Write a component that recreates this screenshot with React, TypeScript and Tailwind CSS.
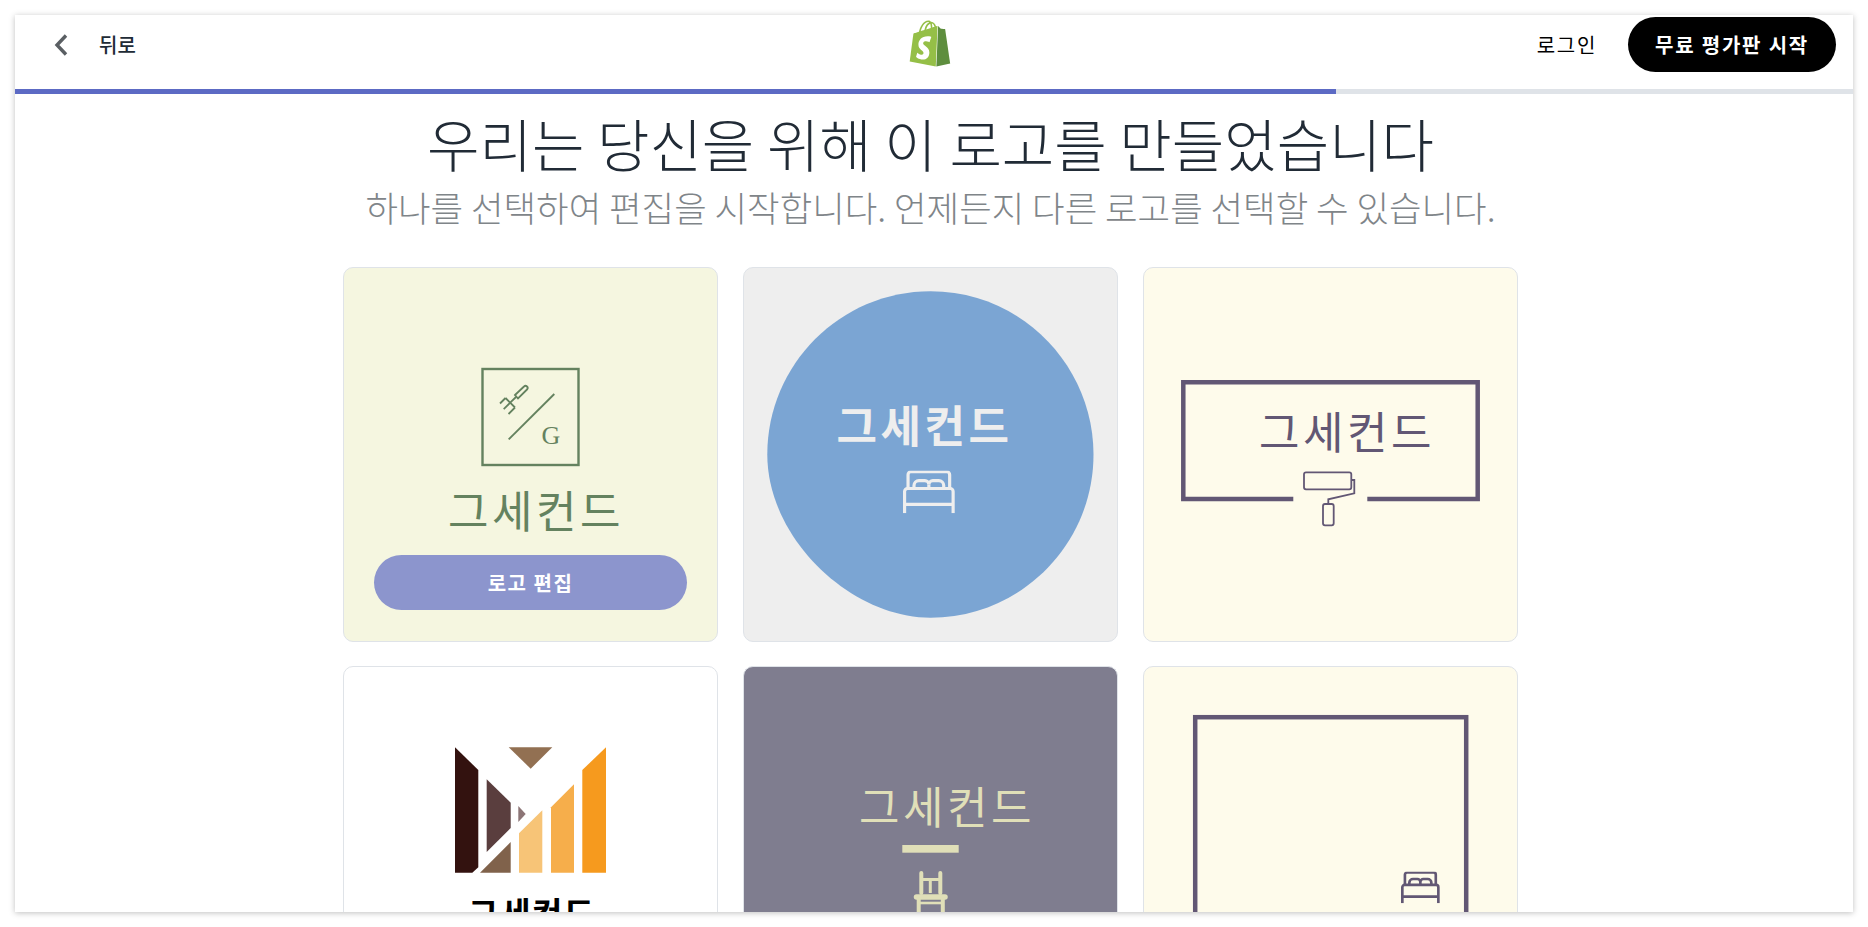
import React from 'react';

const kr = "font-['Noto_Sans_CJK_KR',sans-serif]";

const Bed = ({ x, y, w, h, sw }: { x: number; y: number; w: number; h: number; sw: number }) => (
  <svg x={x} y={y} width={w} height={h} viewBox="0 0 52 43" fill="none" stroke="currentColor" strokeWidth={sw}>
    <path d="M5 18V4a3 3 0 0 1 3-3h36a3 3 0 0 1 3 3v14" />
    <path d="M1.5 43V21a3 3 0 0 1 3-3h43a3 3 0 0 1 3 3v22" />
    <path d="M1.5 34h49" />
    <path d="M11 18v-3a5 5 0 0 1 5-5h6a4 4 0 0 1 4 4 4 4 0 0 1 4-4h6a5 5 0 0 1 5 5v3" />
    <path d="M26 14v4" />
  </svg>
);

const Name = ({ x, y, className = '' }: { x: number; y: number; className?: string }) => (
  <text x={x} y={y} textAnchor="middle" fontSize={44} letterSpacing={3.5} className={`${kr} ${className}`}>
    그세컨드
  </text>
);

const ForkLogo = () => (
  <svg viewBox="0 0 375 375" className="block h-full w-full text-[#64825f]" fill="none" stroke="currentColor">
    <rect x={139.5} y={102} width={96} height={96} strokeWidth={2.4} />
    <path d="M165.7 172.3 211.3 127" strokeWidth={1.9} />
    <path d="M162.5 131 172 140.5M162.5 131 157 136.5M167.2 135.7 160.7 142.2M172 140.5 165.5 147M167.2 135.7 173 130" strokeWidth={1.8} />
    <path d="M172 128 181 119.5a2 2 0 0 1 3 3l-9 9z" strokeWidth={1.8} />
    <text x={208} y={177} textAnchor="middle" fontSize={26} stroke="none" fill="currentColor" className="font-['Liberation_Serif',serif]">G</text>
    <g stroke="none" fill="currentColor"><Name x={193} y={261} /></g>
  </svg>
);

const BlobLogo = () => (
  <svg viewBox="0 0 375 375" className="block h-full w-full text-[#eeeeee]">
    <path d="M187.5 24.3C280 24.3 350.5 100 350.5 187.5 350.5 277.5 277.5 350.7 187.5 350.7 108 350.7 24.3 272 24.3 187.5 24.3 97.5 97.5 24.3 187.5 24.3z" fill="#7ba5d3" />
    <g fill="currentColor" className="font-bold"><Name x={181.5} y={176} /></g>
    <g fill="none"><Bed x={159.7} y={203.7} w={52.3} h={42.6} sw={3.2} /></g>
  </svg>
);

const RollerLogo = () => (
  <svg viewBox="0 0 375 375" className="block h-full w-full text-[#625774]" fill="none" stroke="currentColor">
    <path d="M150.3 232H40.3V115.3H334.7V232H224.3" strokeWidth={4.5} />
    <rect x={161} y={205.3} width={47.3} height={17} rx={2} strokeWidth={1.8} />
    <path d="M208.3 213h3v13.3l-26 6v4.7" strokeWidth={1.8} />
    <rect x={180} y={237} width={10.7} height={21.3} rx={2} strokeWidth={1.8} />
    <g stroke="none" fill="currentColor"><Name x={204} y={182} /></g>
  </svg>
);

const MLogo = () => (
  <svg viewBox="0 0 375 375" className="block h-full w-full text-black">
    <polygon points="112,81.3 135.3,104 135.3,201.3 129.3,206.7 112,206.7" fill="#33120f" />
    <polygon points="165.7,81.3 209.3,81.3 187.7,102.7" fill="#927052" />
    <polygon points="143.7,113.3 167.7,136.7 167.7,162 143.7,186" fill="#5a3e3e" />
    <polygon points="175.3,140 182.7,148 175.3,156" fill="#8c7576" />
    <polygon points="137,206.7 167.7,176 167.7,206.7" fill="#80624b" />
    <polygon points="176,167.3 199.3,144.3 199.3,206.7 176,206.7" fill="#f7c477" />
    <polygon points="208,141.3 231,118.3 231,206.7 208,206.7" fill="#f6ae4b" />
    <polygon points="239.3,104 263,81.3 263,206.7 239.3,206.7" fill="#f69a1e" />
    <text x={189} y={260} textAnchor="middle" fontSize={33} letterSpacing={1.5} fill="currentColor" className={`${kr} font-bold`}>그세컨드</text>
  </svg>
);

const ChairLogo = () => (
  <svg viewBox="0 0 375 375" className="block h-full w-full text-[#e0dfb8]" fill="none" stroke="currentColor">
    <g stroke="none" fill="currentColor"><Name x={204} y={158} /></g>
    <rect x={159.3} y={179} width={56.4} height={7.7} fill="currentColor" stroke="none" />
    <path d="M178.3 207v20M197.3 207v20" strokeWidth={4} strokeLinecap="round" />
    <path d="M178 213.5h19" strokeWidth={3} />
    <path d="M187.3 214v13" strokeWidth={3} />
    <path d="M173.5 231h28.5" strokeWidth={5.5} strokeLinecap="round" />
    <path d="M175.7 233v40M199.8 233v40" strokeWidth={4} />
    <path d="M176 237h24" strokeWidth={2.6} />
  </svg>
);

const FrameLogo = () => (
  <svg viewBox="0 0 375 375" className="block h-full w-full text-[#625774]" fill="none" stroke="currentColor">
    <rect x={52.2} y={51.2} width={271} height={272} strokeWidth={4.5} />
    <Bed x={257.7} y={205.7} w={39.3} h={31.6} sw={3.6} />
  </svg>
);

const cards = [
  { bg: 'bg-[#f5f6e0]', Logo: ForkLogo, hovered: true },
  { bg: 'bg-[#eeeeee]', Logo: BlobLogo },
  { bg: 'bg-[#fefbeb]', Logo: RollerLogo },
  { bg: 'bg-white', Logo: MLogo },
  { bg: 'bg-[#7f7d8f]', Logo: ChairLogo },
  { bg: 'bg-[#fefbeb]', Logo: FrameLogo },
];

const ShopifyBag = () => (
  <svg viewBox="0 0 24 24" className="h-[47px] w-[46px]">
    <path fill="#5e8e3e" d="M15.337 23.979l7.216-1.561s-2.604-17.613-2.625-17.73c-.018-.116-.114-.192-.211-.192s-1.929-.136-1.929-.136-1.275-1.274-1.439-1.411c-.045-.037-.075-.057-.121-.074l-.914 21.104h.023z" />
    <path fill="#95bf47" d="M11.71 11.305s-.81-.424-1.774-.424c-1.447 0-1.504.906-1.504 1.141 0 1.232 3.24 1.715 3.24 4.629 0 2.295-1.44 3.76-3.406 3.76-2.354 0-3.54-1.465-3.54-1.465l.646-2.086s1.245 1.066 2.28 1.066c.675 0 .975-.545.975-.932 0-1.619-2.654-1.694-2.654-4.359-.034-2.237 1.571-4.416 4.827-4.416 1.257 0 1.875.361 1.875.361l-.945 2.715-.02.01zM11.17.83c.136 0 .271.038.405.135-.984.465-2.064 1.639-2.508 3.992-.656.213-1.293.405-1.889.578C7.697 3.75 8.951.84 11.17.84V.83zm1.235 2.949v.135c-.754.232-1.583.484-2.394.736.466-1.777 1.333-2.645 2.085-2.971.193.501.309 1.176.309 2.1zm.539-2.234c.694.074 1.141.867 1.429 1.755-.349.114-.735.231-1.158.366v-.252c0-.752-.096-1.371-.271-1.871v.002zm2.992 1.289c-.02 0-.06.021-.078.021s-.289.075-.714.21c-.423-1.233-1.176-2.37-2.508-2.37h-.115C12.135.209 11.669 0 11.265 0 8.159 0 6.675 3.877 6.21 5.846c-1.194.365-2.063.636-2.16.674-.675.213-.694.232-.772.87-.075.462-1.83 14.063-1.83 14.063L15.009 24l.927-21.166z" />
  </svg>
);

export default function App() {
  return (
    <div className={`h-[927px] overflow-hidden bg-white p-[15px] ${kr}`}>
      <div className="flex h-[897px] flex-col overflow-hidden bg-white shadow-[0_1px_6px_rgba(0,0,0,0.25)]">
        <header className="relative flex h-[74px] shrink-0 items-start justify-between pl-[39px] pr-[17px] pt-[2px]">
          <div className="flex h-[55px] items-center gap-[31px]">
            <svg width="14" height="22" viewBox="0 0 14 22" fill="none" stroke="#5a5f63" strokeWidth="3.4">
              <path d="M12 1.5 3 11l9 9.5" />
            </svg>
            <span className="text-[20px] font-medium text-[#212b36]">뒤로</span>
          </div>
          <div className="absolute left-[892px] top-[5px]"><ShopifyBag /></div>
          <div className="flex h-[55px] items-center gap-[31px]">
            <span className="text-[20px] tracking-[1.7px] text-black">로그인</span>
            <button className="h-[55px] w-[208px] rounded-full bg-black text-[20px] font-bold tracking-[1.8px] text-white">무료 평가판 시작</button>
          </div>
        </header>
        <div className="h-[5px] shrink-0 bg-[#dfe3e8]">
          <div className="h-full w-[1321px] bg-[#5c6ac4]" />
        </div>
        <main className="pr-[7px] text-center">
          <h1 className="mt-[13px] text-[57px] font-light leading-[70px] text-[#212b36]">우리는 당신을 위해 이 로고를 만들었습니다</h1>
          <p className="mt-[7px] text-[35.4px] font-light leading-[46px] text-[#7f8589]">하나를 선택하여 편집을 시작합니다. 언제든지 다른 로고를 선택할 수 있습니다.</p>
          <div className="mt-[37px] grid grid-cols-[repeat(3,375px)] justify-center gap-x-[25px] gap-y-[24px]">
            {cards.map(({ bg, Logo, hovered }, i) => (
              <div key={i} className={`relative h-[375px] overflow-hidden rounded-[10px] border border-[#dfe3e8] ${bg}`}>
                <div className="-m-px h-[375px] w-[375px]"><Logo /></div>
                {hovered && (
                  <button className="absolute bottom-[31px] left-[30px] h-[55px] w-[313px] rounded-full bg-[#8c95cd] text-[20px] font-bold tracking-[1.5px] text-white">로고 편집</button>
                )}
              </div>
            ))}
          </div>
        </main>
      </div>
    </div>
  );
}
